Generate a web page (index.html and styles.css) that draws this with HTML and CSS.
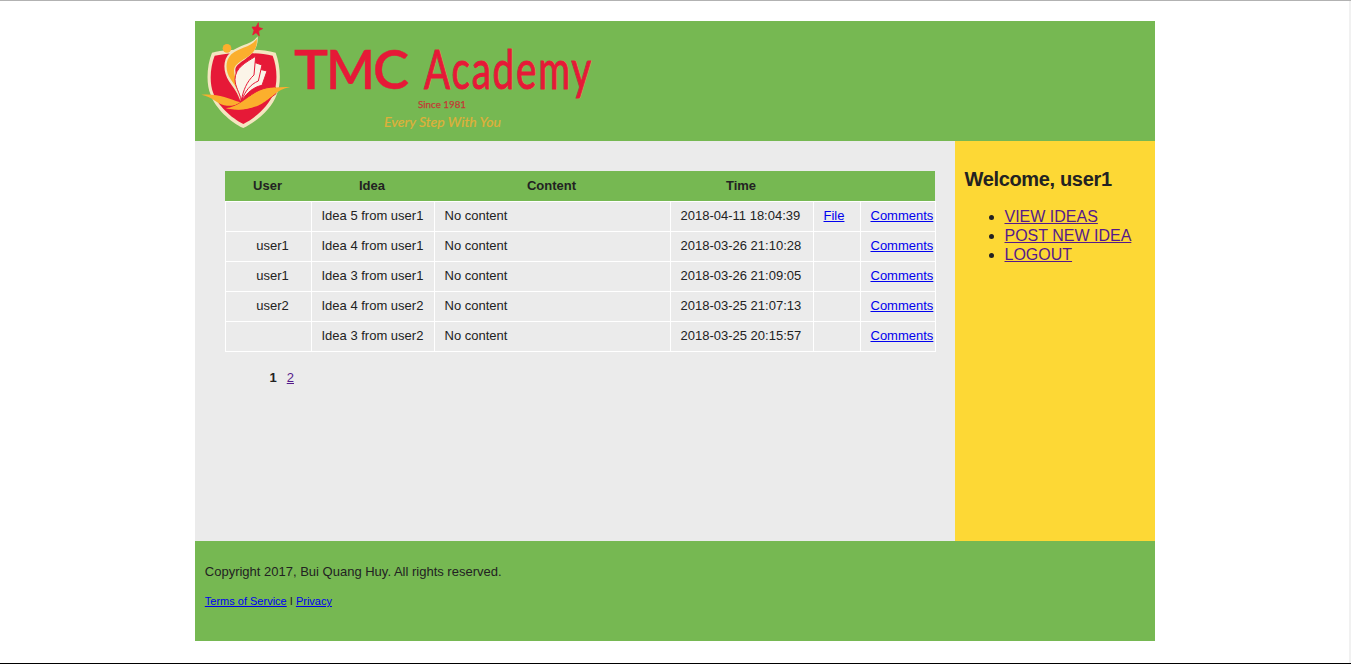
FILE: index.html
```html
<!DOCTYPE html>
<html lang="en">
<head>
<meta charset="utf-8">
<title>TMC Academy</title>
<link rel="stylesheet" href="styles.css">
</head>
<body>
<div class="page">
  <header class="header">
    <svg class="logo" width="420" height="120" viewBox="0 0 420 120">
      <g transform="translate(-5 -6) scale(.33333)">
        <path fill="#f3e6c0" d="M160 104C130 104 98 104 66 113C51 150 47 205 62 239C75 278 121 322 160 339C199 322 247 278 260 239C275 205 271 150 257 113C224 104 184 104 160 104Z"/>
        <path fill="#e61937" d="M160 114C132 114 104 116 74 122C61 155 57 202 70 235C82 270 124 310 160 327C196 310 238 270 251 235C264 202 261 155 248 122C218 116 184 114 160 114Z"/>
        <path fill="#f3e6c0" d="M203 64C188 88 147 88 120 113C96 136 100 172 117 199C133 222 143 235 151 258C164 205 136 196 136 166C137 135 208 130 203 64Z"/>
        <path fill="#fbaf2d" d="M200 71C183 98 145 97 124 118C104 138 106 168 122 193C136 213 146 226 151 249C157 207 132 198 132 166C134 130 208 130 200 71Z"/>
        <path fill="#fbf4e8" stroke="#e61937" stroke-width="3" d="M210 163L231 168L216 211C190 216 171 234 157 254C159 217 178 185 210 163Z"/>
        <path fill="#fbf4e8" stroke="#e61937" stroke-width="3" d="M193 142L216 150L205 198C181 208 165 229 156 254C151 212 165 170 193 142Z"/>
        <path fill="#fbf4e8" stroke="#e61937" stroke-width="3" d="M197 124L192 180C170 200 160 226 154 256C149 233 135 215 135 193C136 158 166 143 197 124Z"/>
        <circle cx="111" cy="100" r="13" fill="#fbaf2d"/>
        <path fill="#fbaf2d" d="M34 239C85 235 111 249 151 262C142 272 112 279 84 263C62 248 50 243 34 239Z"/>
        <path fill="#fbaf2d" stroke="#e61937" stroke-width="3" d="M105 280C170 272 180 216 256 216L258 236C244 247 231 257 215 266C178 286 144 289 105 280Z"/>
        <path fill="#fbaf2d" d="M107 280C172 272 177 211 301 216C256 225 244 250 215 266C178 286 144 287 107 280Z"/>
        <path fill="#e61937" stroke="#e61937" stroke-width="2" d="M205 23L206 37L218 41L206 47L208 63L198 53L188 60L192 46L186 36L198 36Z"/>
      </g>
      <text class="logo-tmc" y="68"><tspan x="99" textLength="34" lengthAdjust="spacingAndGlyphs">T</tspan><tspan x="131" textLength="49" lengthAdjust="spacingAndGlyphs">M</tspan><tspan x="178" textLength="36" lengthAdjust="spacingAndGlyphs">C</tspan></text>
      <text class="logo-academy" x="229" y="68" textLength="169" lengthAdjust="spacingAndGlyphs">Academy</text>
      <text class="logo-since" x="223" y="87" textLength="48" lengthAdjust="spacingAndGlyphs">Since 1981</text>
      <text class="logo-slogan" x="189" y="105.5" textLength="117" lengthAdjust="spacingAndGlyphs">Every Step With You</text>
    </svg>
  </header>
  <div class="middle">
    <main class="content">
      <div class="table">
        <div class="head"><b>User</b><b>Idea</b><b>Content</b><b>Time</b></div>
        <div class="row"><span></span><span>Idea 5 from user1</span><span>No content</span><span>2018-04-11 18:04:39</span><span><a href="#">File</a></span><span><a href="#">Comments</a></span></div>
        <div class="row"><span>user1</span><span>Idea 4 from user1</span><span>No content</span><span>2018-03-26 21:10:28</span><span></span><span><a href="#">Comments</a></span></div>
        <div class="row"><span>user1</span><span>Idea 3 from user1</span><span>No content</span><span>2018-03-26 21:09:05</span><span></span><span><a href="#">Comments</a></span></div>
        <div class="row"><span>user2</span><span>Idea 4 from user2</span><span>No content</span><span>2018-03-25 21:07:13</span><span></span><span><a href="#">Comments</a></span></div>
        <div class="row"><span></span><span>Idea 3 from user2</span><span>No content</span><span>2018-03-25 20:15:57</span><span></span><span><a href="#">Comments</a></span></div>
      </div>
      <div class="pager"><b>1</b><a class="visited" href="#">2</a></div>
    </main>
    <aside class="sidebar">
      <h2>Welcome, user1</h2>
      <ul>
        <li><a class="visited" href="#">VIEW IDEAS</a></li>
        <li><a class="visited" href="#">POST NEW IDEA</a></li>
        <li><a class="visited" href="#">LOGOUT</a></li>
      </ul>
    </aside>
  </div>
  <footer class="footer">
    <p class="copyright">Copyright 2017, Bui Quang Huy. All rights reserved.</p>
    <p class="legal"><a href="#">Terms of Service</a> I <a href="#">Privacy</a></p>
  </footer>
</div>
</body>
</html>
```
FILE: styles.css
```css
* { box-sizing: border-box; }
body {
  margin: 0;
  height: 664px;
  overflow: hidden;
  border-top: 1px solid #b2b2b2;
  border-bottom: 1px solid #000;
  background: linear-gradient(#f1f1f1, #f1f1f1) right / 2px 100% no-repeat #fff;
  font-family: "Liberation Sans", Arial, sans-serif;
  font-size: 13px;
  color: #222;
}
a { color: #0000ee; }
a.visited { color: #551a8b; }
.page { width: 960px; margin: 20px 0 0 195px; }
.header { height: 120px; background: #76b852; }
.logo { display: block; overflow: visible; }
.logo-tmc { font: 600 54px Lato, sans-serif; fill: #e61937; stroke: #e61937; stroke-width: .4px; }
.logo-academy { font: 55px Lato, sans-serif; letter-spacing: 2.5px; fill: #e61937; stroke: #e61937; stroke-width: 1px; }
.logo-since { font: 10px Lato, sans-serif; fill: #c33a35; stroke: #c33a35; stroke-width: .25px; }
.logo-slogan { font: italic 12.5px Lato, sans-serif; fill: #dfb03a; stroke: #dfb03a; stroke-width: .2px; }
.middle { display: flex; height: 400px; }
.content { width: 760px; padding: 30px; background: #ebebeb; }
.table { width: 711px; border-bottom: 1px solid #fff; }
.head, .row { display: grid; height: 30px; line-height: 30px; }
.head { width: 710px; grid-template-columns: 85px 124px 235px 144px; background: #76b852; text-align: center; }
.row { grid-template-columns: 86px 123px 236px 143px 47px 76px; line-height: 28px; border-right: 1px solid #fff; }
.row span { border-left: 1px solid #fff; border-top: 1px solid #fff; padding-left: 9.5px; white-space: nowrap; }
.row span:first-child { padding-left: 8px; text-align: center; }
.pager { display: flex; gap: 10px; padding: 17px 0 0 44.5px; line-height: 17px; }
.sidebar { width: 200px; padding: 26px 9.5px; background: #fdd835; }
.sidebar h2 { margin: 0; font-size: 20px; line-height: 24px; letter-spacing: -.34px; white-space: nowrap; }
.sidebar ul { margin: 16px 0 0; padding-left: 40px; font-size: 16px; line-height: 19px; }
.footer { height: 100px; padding: 23px 9.8px; background: #76b852; }
.footer p { margin: 0; }
.copyright { line-height: 16px; }
.legal { padding-top: 15px; font-size: 11px; line-height: 13px; }
```
